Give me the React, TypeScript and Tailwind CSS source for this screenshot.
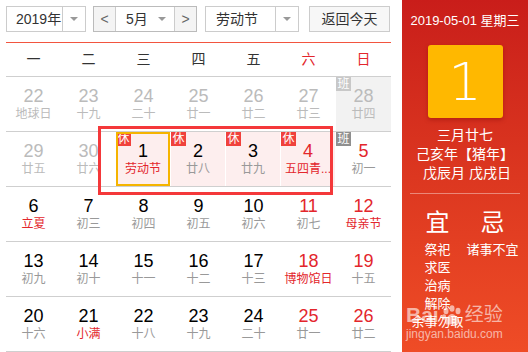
import React from 'react';

type Day = {
    n: number;
    sub: string;
    other?: boolean;
    redNum?: boolean;
    redSub?: boolean;
    badge?: 'rest' | 'work';
    pink?: boolean;
    today?: boolean;
    grayBg?: boolean;
};

const weeks: Day[][] = [
    [
        { n: 22, sub: '地球日', other: true },
        { n: 23, sub: '十九', other: true },
        { n: 24, sub: '二十', other: true },
        { n: 25, sub: '廿一', other: true },
        { n: 26, sub: '廿二', other: true },
        { n: 27, sub: '廿三', other: true },
        { n: 28, sub: '廿四', other: true, badge: 'work', grayBg: true },
    ],
    [
        { n: 29, sub: '廿五', other: true },
        { n: 30, sub: '廿六', other: true },
        { n: 1, sub: '劳动节', redSub: true, badge: 'rest', pink: true, today: true },
        { n: 2, sub: '廿八', badge: 'rest', pink: true },
        { n: 3, sub: '廿九', badge: 'rest', pink: true },
        { n: 4, sub: '五四青...', redNum: true, redSub: true, badge: 'rest', pink: true },
        { n: 5, sub: '初一', redNum: true, badge: 'work' },
    ],
    [
        { n: 6, sub: '立夏', redSub: true },
        { n: 7, sub: '初三' },
        { n: 8, sub: '初四' },
        { n: 9, sub: '初五' },
        { n: 10, sub: '初六' },
        { n: 11, sub: '初七', redNum: true },
        { n: 12, sub: '母亲节', redNum: true, redSub: true },
    ],
    [
        { n: 13, sub: '初九' },
        { n: 14, sub: '初十' },
        { n: 15, sub: '十一' },
        { n: 16, sub: '十二' },
        { n: 17, sub: '十三' },
        { n: 18, sub: '博物馆日', redNum: true, redSub: true },
        { n: 19, sub: '十五', redNum: true },
    ],
    [
        { n: 20, sub: '十六' },
        { n: 21, sub: '小满', redSub: true },
        { n: 22, sub: '十八' },
        { n: 23, sub: '十九' },
        { n: 24, sub: '二十' },
        { n: 25, sub: '廿一', redNum: true },
        { n: 26, sub: '廿二', redNum: true },
    ],
];

const Caret = () => (
    <span className="w-0 h-0 border-x-[4px] border-x-transparent border-t-[4px] border-t-[#999]" />
);

const DayCell: React.FC<{ d: Day }> = ({ d }) => {
    const numColor = d.other ? 'text-[#bbbbbb]' : d.redNum ? 'text-[#e3262c]' : 'text-black';
    const subColor = d.other ? 'text-[#bbbbbb]' : d.redSub ? 'text-[#e3262c]' : 'text-[#999999]';
    return (
        <div
            className={
                'relative flex flex-col items-center pt-[9px] ' +
                (d.pink ? 'bg-[#fdeeee] border-r border-white ' : '') +
                (d.grayBg ? 'bg-[#f2f2f2] ' : '')
            }
        >
            {d.badge && (
                <span
                    className={
                        'absolute left-0 top-0 w-[15px] h-[14px] flex items-center justify-center text-[12px] leading-none text-white ' +
                        (d.badge === 'rest' ? 'bg-[#f0413c]' : d.other ? 'bg-[#c8c8c8]' : 'bg-[#8f8f8f]')
                    }
                >
                    {d.badge === 'rest' ? '休' : '班'}
                </span>
            )}
            {d.today && <span className="absolute inset-0 border-2 border-[#f5b400]" />}
            <span className={'text-[18px] leading-[20px] ' + numColor}>{d.n}</span>
            <span className={'text-[12px] leading-[17px] whitespace-nowrap ' + subColor}>{d.sub}</span>
        </div>
    );
};

export default function App() {
    return (
        <div className="flex w-[528px] h-[352px] overflow-hidden bg-white font-['Liberation_Sans','Noto_Sans_CJK_SC',sans-serif]">
            {/* Calendar */}
            <div className="relative w-[402px] pl-[6px] pr-[11px] pt-[6px]">
                <div className="flex h-[26px] text-[14px] text-[#333]">
                    <div className="flex w-[80px] border border-[#cccccc]">
                        <span className="w-[55px] pl-[9px] leading-[24px] whitespace-nowrap">2019年</span>
                        <span className="flex-1 flex items-center justify-center border-l border-[#cccccc]">
                            <Caret />
                        </span>
                    </div>
                    <div className="flex w-[104px] ml-[7px] border border-[#bbbbbb]">
                        <span className="w-[22px] flex items-center justify-center bg-[#f4f4f4] text-[#666] border-r border-[#cccccc]">&lt;</span>
                        <span className="flex-1 flex items-center pl-[10px] pr-[8px] justify-between whitespace-nowrap">
                            <span>5月</span>
                            <Caret />
                        </span>
                        <span className="w-[22px] flex items-center justify-center bg-[#f4f4f4] text-[#666] border-l border-[#cccccc]">&gt;</span>
                    </div>
                    <div className="flex w-[94px] ml-[8px] border border-[#cccccc]">
                        <span className="w-[69px] pl-[10px] leading-[24px] whitespace-nowrap">劳动节</span>
                        <span className="flex-1 flex items-center justify-center border-l border-[#cccccc]">
                            <Caret />
                        </span>
                    </div>
                    <button className="w-[81px] ml-[10px] border border-[#cccccc] bg-[#f7f7f7] text-[14px] text-[#333] whitespace-nowrap">
                        返回今天
                    </button>
                </div>

                <div className="mt-[10px] h-[1px] bg-[#f2553f]" />

                <div className="grid grid-cols-7 h-[34px] items-center border-b border-[#cfcfcf] text-[14px] text-[#333] text-center">
                    <span>一</span>
                    <span>二</span>
                    <span>三</span>
                    <span>四</span>
                    <span>五</span>
                    <span className="text-[#e3262c]">六</span>
                    <span className="text-[#e3262c]">日</span>
                </div>

                {weeks.map((w, i) => (
                    <div key={i} className="grid grid-cols-7 h-[55px] border-b border-[#cfcfcf]">
                        {w.map((d, j) => (
                            <DayCell key={j} d={d} />
                        ))}
                    </div>
                ))}

                {/* annotation box */}
                <div className="absolute left-[98px] top-[126px] w-[235px] h-[69px] border-[3px] border-[#f4383a]" />
            </div>

            {/* Side panel */}
            <div className="relative flex-1 flex flex-col items-center bg-gradient-to-b from-[#c91d1a] to-[#ef4c26] text-white">
                <div className="mt-[12px] text-[13px] leading-[17px] whitespace-nowrap">2019-05-01 星期三</div>
                <div className="mt-[16px] w-[75px] h-[73px] rounded-[3px] bg-[#ffb800] shadow-[0_2px_4px_rgba(120,0,0,0.35)] flex items-center justify-center">
                    <span className="text-[52px] leading-none font-['DejaVu_Sans','Liberation_Sans',sans-serif] font-extralight">1</span>
                </div>
                <div className="mt-[8px] text-[14px] leading-[19px] text-center whitespace-nowrap">
                    <div>三月廿七</div>
                    <div>己亥年【猪年】</div>
                    <div className="pl-[4px]">戊辰月 戊戌日</div>
                </div>
                <div className="mt-[10px] w-[110px] h-[1px] bg-white/40" />
                <div className="flex w-[110px] mt-[16px]">
                    <div className="w-[55px] flex flex-col items-center">
                        <span className="text-[24px] leading-[26px] mb-[5px]">宜</span>
                        <div className="flex flex-col items-center text-[13px] leading-[18px]">
                            <span>祭祀</span>
                            <span>求医</span>
                            <span>治病</span>
                            <span>解除</span>
                            <span className="whitespace-nowrap">余事勿取</span>
                        </div>
                    </div>
                    <div className="w-[55px] flex flex-col items-center">
                        <span className="text-[24px] leading-[26px] mb-[5px]">忌</span>
                        <span className="text-[13px] leading-[18px] whitespace-nowrap">诸事不宜</span>
                    </div>
                </div>

                {/* watermark */}
                <div className="absolute left-[4px] top-[304px] flex flex-col text-white/60 pointer-events-none">
                    <div className="flex items-center gap-[2px] text-[21px] leading-[22px] font-bold">
                        <span>Bai</span>
                        <svg width="22" height="20" viewBox="0 0 22 20" className="fill-white/60">
                            <ellipse cx="5" cy="6" rx="2.5" ry="3.2" />
                            <ellipse cx="11" cy="3.5" rx="2.5" ry="3.2" />
                            <ellipse cx="17" cy="6" rx="2.5" ry="3.2" />
                            <ellipse cx="3" cy="12" rx="2.2" ry="2.8" />
                            <path d="M11 9c3 0 7 5 7 8s-3 3-7 2c-4 1-7 1-7-2s4-8 7-8z" />
                        </svg>
                        <span className="text-[19px] font-normal">经验</span>
                    </div>
                    <span className="text-[12px] leading-[14px] mt-[1px]">jingyan.baidu.com</span>
                </div>
            </div>
        </div>
    );
}
